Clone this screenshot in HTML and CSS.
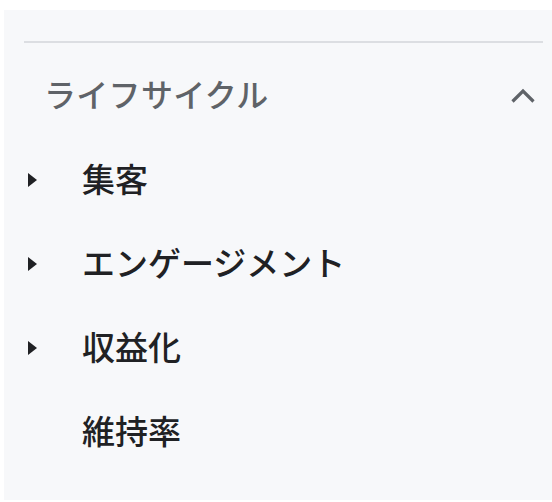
FILE: index.html
```html
<!DOCTYPE html>
<html lang="ja">
<head>
<meta charset="utf-8">
<link rel="stylesheet" href="styles.css">
</head>
<body>
<nav class="panel">
  <hr class="divider">
  <div class="section-head">
    <span class="section-title">ライフサイクル</span>
    <svg class="chevron" width="26" height="16" viewBox="0 0 26 16"><path d="M2.5 13.5 L13 3 L23.5 13.5" fill="none" stroke="#5f6368" stroke-width="3.2"/></svg>
  </div>
  <ul class="items">
    <li class="item"><span class="caret"></span><span class="label">集客</span></li>
    <li class="item"><span class="caret"></span><span class="label">エンゲージメント</span></li>
    <li class="item"><span class="caret"></span><span class="label">収益化</span></li>
    <li class="item"><span class="caret none"></span><span class="label">維持率</span></li>
  </ul>
</nav>
</body>
</html>
```
FILE: styles.css
```css
html, body { margin: 0; padding: 0; background: #ffffff; }
body { font-family: "Noto Sans CJK JP", "Noto Sans", sans-serif; }
.panel {
  margin: 10px 0 0 4px;
  height: 490px;
  background: #f7f8fa;
  padding-top: 31px;
  box-sizing: border-box;
}
.divider {
  margin: 0 9px 0 20px;
  border: 0;
  height: 2px;
  background: #dcdee2;
}
.section-head {
  display: flex;
  align-items: center;
  justify-content: space-between;
  height: 95px;
  padding: 0 16px 0 40px;
  box-sizing: border-box;
}
.section-title {
  font-size: 32px;
  font-weight: 500;
  color: #5f6368;
  letter-spacing: 0.3px;
  margin-top: 5px;
}
.chevron { display: block; margin-top: 11px; }
.items { list-style: none; margin: 0; padding: 0; }
.item {
  display: flex;
  align-items: center;
  height: 84px;
  padding-left: 24px;
}
.caret {
  width: 0; height: 0;
  border-top: 7px solid transparent;
  border-bottom: 7px solid transparent;
  border-left: 9px solid #202124;
  margin-right: 45px;
}
.caret.none { border-left-color: transparent; }
.label {
  font-size: 33px;
  font-weight: 500;
  color: #202124;
  margin-top: -4px;
}
```
